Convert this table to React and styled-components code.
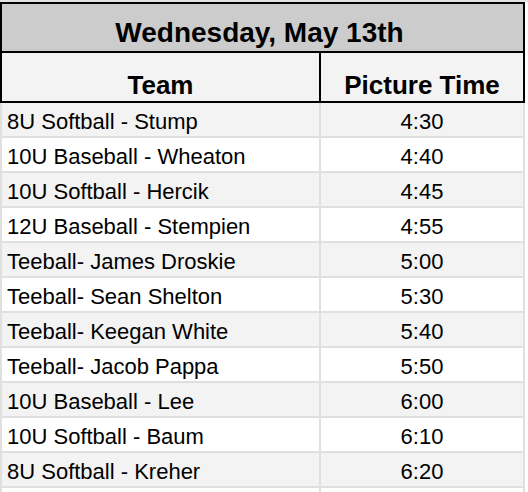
import React from 'react';
import styled, { createGlobalStyle } from 'styled-components';

const GlobalStyle = createGlobalStyle`
  body {
    margin: 0;
    background: #ffffff;
    font-family: "Liberation Sans", Arial, sans-serif;
  }
`;

const Page = styled.div`
  width: 528px;
  height: 492px;
  overflow: hidden;
  border-top: 2px solid #e2e2e2;
  box-sizing: border-box;
`;

const Sheet = styled.div`
  width: 525px;
  display: flex;
  flex-direction: column;
`;

const TitleRow = styled.div`
  height: 51px;
  box-sizing: border-box;
  display: flex;
  align-items: flex-end;
  justify-content: center;
  background: #cccccc;
  border: 2px solid #000;
  font-size: 28px;
  font-weight: bold;
  color: #000;
  padding: 0 6px 2px 0;
`;

const Row = styled.div`
  display: grid;
  grid-template-columns: 317px 202px;
  column-gap: 2px;
  height: ${props => props.header ? '48px' : '33px'};
  background: ${props => props.header ? '#000' : '#e0e0e0'};
  border-left: 2px solid ${props => props.header ? '#000' : '#e0e0e0'};
  border-right: 2px solid ${props => props.header ? '#000' : '#e0e0e0'};
  border-bottom: 2px solid ${props => props.header ? '#000' : '#e0e0e0'};
`;

const Cell = styled.div`
  display: flex;
  align-items: flex-end;
  justify-content: ${props => props.center ? 'center' : 'flex-start'};
  padding: 0 5px 1px;
  background: ${props => props.shade ? '#f3f3f3' : '#ffffff'};
  font-size: 22px;
  color: #000;
  white-space: nowrap;
  overflow: hidden;
`;

const HeadCell = styled(Cell)`
  font-size: 26px;
  font-weight: bold;
  padding-bottom: 0;
`;

const schedule = [
  ['8U Softball - Stump', '4:30'],
  ['10U Baseball - Wheaton', '4:40'],
  ['10U Softball - Hercik', '4:45'],
  ['12U Baseball - Stempien', '4:55'],
  ['Teeball- James Droskie', '5:00'],
  ['Teeball- Sean Shelton', '5:30'],
  ['Teeball- Keegan White', '5:40'],
  ['Teeball- Jacob Pappa', '5:50'],
  ['10U Baseball - Lee', '6:00'],
  ['10U Softball - Baum', '6:10'],
  ['8U Softball - Kreher', '6:20'],
  ['', ''],
];

export default function App() {
  return (
    <Page>
      <GlobalStyle />
      <Sheet>
        <TitleRow>Wednesday, May 13th</TitleRow>
        <Row header>
          <HeadCell center shade>Team</HeadCell>
          <HeadCell center shade>Picture Time</HeadCell>
        </Row>
        {schedule.map(([team, time], i) => (
          <Row key={i}>
            <Cell shade={i % 2 === 0}>{team}</Cell>
            <Cell center shade={i % 2 === 0}>{time}</Cell>
          </Row>
        ))}
      </Sheet>
    </Page>
  );
}
